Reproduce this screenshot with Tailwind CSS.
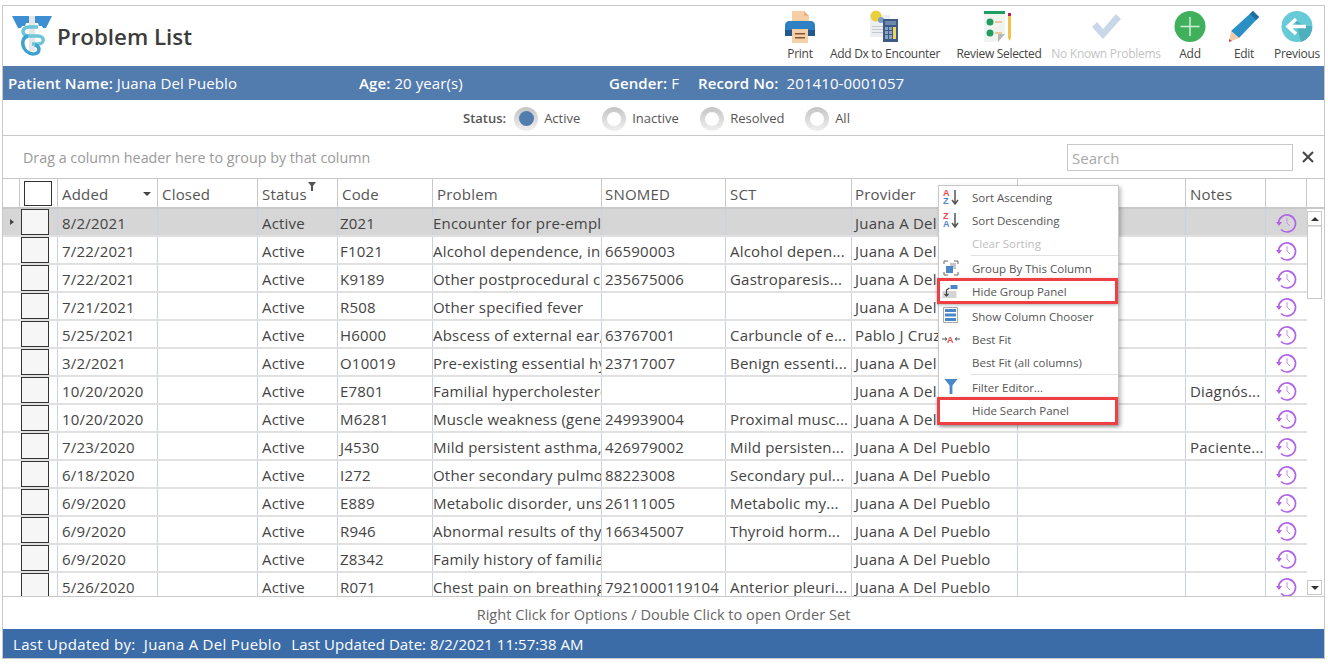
<!DOCTYPE html>
<html lang="en">
<head>
    <meta charset="UTF-8">
    <title>Problem List</title>
    <script src="https://cdn.jsdelivr.net/npm/@tailwindcss/browser@4"></script>
</head>
<body class="bg-white font-['Open_Sans',sans-serif] text-[#444] overflow-hidden">
<div class="relative mx-[2px] mt-[5px] w-[1323px] h-[654px] border border-[#c8c8c8] flex flex-col">

    <!-- title and toolbar -->
    <div class="h-[60px] flex items-start shrink-0">
        <div class="w-[54px] pl-[9px] pt-[9px] shrink-0">
            <svg width="42" height="42" viewBox="0 0 42 42">
                <path d="M0 1h17v7h-3l-1 3h-3l-1 2h-3z" fill="#3d8fd1"/>
                <path d="M40 1H23v7h3l1 3h3l1 2h3z" fill="#3d8fd1"/>
                <path d="M17 1h6v35h-6z" fill="#e4e6e8"/>
                <path d="M26 12h-9c-8 0-8 9 0 9h9c7 0 7 8 0 8h-6" fill="none" stroke="#6cc5d8" stroke-width="3.5"/>
                <path d="M16 21c-9 2-6 17 5 18 7 0 8-7 2-9" fill="none" stroke="#3da2d0" stroke-width="3.5"/>
            </svg>
        </div>
        <div class="pt-[15px] text-[22.3px] leading-[32px] font-semibold text-[#3c3c3c] whitespace-nowrap">Problem List</div>
        <div class="ml-auto flex h-full text-[12px] tracking-[-0.3px] text-[#444]">
            <div class="w-[44px] flex flex-col items-center pt-[4px]">
                <svg width="32" height="33" viewBox="0 0 32 33">
                    <path d="M8 1h12l5 5v8H8z" fill="#f7cfa6"/>
                    <path d="M20 1l5 5h-5z" fill="#e8b486"/>
                    <path d="M5 11h22c2 0 4 2 4 4v11H1V15c0-2 2-4 4-4z" fill="#2f7fc4"/>
                    <path d="M1 20h30v6H1z" fill="#23588f"/>
                    <path d="M8 19h16v14H8z" fill="#f7cfa6"/>
                    <path d="M11 23h10v1.500H11zM11 27h10v1.500H11z" fill="#7a5a3c"/>
                </svg>
                <span class="mt-[3px] leading-[16px]">Print</span>
            </div>
            <div class="w-[126px] flex flex-col items-center pt-[4px]">
                <svg width="32" height="33" viewBox="0 0 32 33">
                    <path d="M1 5h20v22H1z" fill="#eceff1"/>
                    <path d="M3 16h12v1H3zM3 19h12v1H3zM3 22h12v1H3z" fill="#c4c8cc"/>
                    <circle cx="7" cy="6" r="5.500" fill="#e9cf3c"/>
                    <circle cx="12" cy="10" r="3" fill="#7f9cc4"/>
                    <path d="M14 9h15v23H14z" fill="#3d5a84"/>
                    <path d="M16 11h11v4H16z" fill="#6d87ad"/>
                    <path d="M16 17h3v3h-3zM20 17h3v3h-3zM16 21h3v3h-3zM20 21h3v3h-3zM16 25h3v4h-3zM20 25h3v4h-3z" fill="#8aa2c4"/>
                    <path d="M24 17h3v12h-3z" fill="#f2d85c"/>
                </svg>
                <span class="mt-[3px] leading-[16px] whitespace-nowrap">Add Dx to Encounter</span>
            </div>
            <div class="w-[102px] flex flex-col items-center pt-[4px]">
                <svg width="32" height="33" viewBox="0 0 32 33">
                    <path d="M1 1h21v23l-7 8H1z" fill="#f1f3ef"/>
                    <path d="M1 1h21v3H1z" fill="#1f9d63"/>
                    <path d="M15 32v-8h7z" fill="#b7b9b5"/>
                    <circle cx="7" cy="12" r="3.500" fill="#1f9d63"/>
                    <circle cx="7" cy="23" r="3.500" fill="#1f9d63"/>
                    <path d="M12 12h7M12 23h7" stroke="#e7a24a" stroke-width="1.200"/>
                    <path d="M25 3h3v3h-3z" fill="#c2185b"/>
                    <path d="M25 6h3v22l-1.500 3-1.500-3z" fill="#f2c14e"/>
                </svg>
                <span class="mt-[3px] leading-[16px] whitespace-nowrap">Review Selected</span>
            </div>
            <div class="w-[112px] flex flex-col items-center pt-[4px]">
                <svg width="32" height="33" viewBox="0 0 32 33">
                    <path d="M2 17l5-5 6 7L26 4l5 5-18 20z" fill="#c9d7e8"/>
                </svg>
                <span class="mt-[3px] leading-[16px] whitespace-nowrap text-[#c4c4c4]">No Known Problems</span>
            </div>
            <div class="w-[56px] flex flex-col items-center pt-[4px]">
                <svg width="32" height="33" viewBox="0 0 32 33">
                    <circle cx="16" cy="16.500" r="15.500" fill="#41b05c"/>
                    <path d="M16 7v19M6.500 16.500h19" stroke="#cdeed5" stroke-width="1.500"/>
                </svg>
                <span class="mt-[3px] leading-[16px]">Add</span>
            </div>
            <div class="w-[52px] flex flex-col items-center pt-[4px]">
                <svg width="32" height="33" viewBox="0 0 32 33">
                    <path d="M25 1l6 6L11 28l-8-7z" fill="#2a8fc2"/>
                    <path d="M25 1l6 6-3 3-6-6z" fill="#1c6f9e"/>
                    <path d="M3 21l8 7-10 4z" fill="#f3c9ae"/>
                    <path d="M1 29l3 2-3 1z" fill="#c2455c"/>
                </svg>
                <span class="mt-[3px] leading-[16px]">Edit</span>
            </div>
            <div class="w-[54px] flex flex-col items-center pt-[4px]">
                <svg width="32" height="33" viewBox="0 0 32 33">
                    <circle cx="16" cy="16.500" r="15.500" fill="#66cbd6"/>
                    <path d="M14 10l10 6 7 0a15.500 15.500 0 0 1-11 16z" fill="#4fb0bd"/>
                    <path d="M15 9l-8 7.500 8 7.500M8 16.500h17" fill="none" stroke="#fff" stroke-width="3.500"/>
                </svg>
                <span class="mt-[3px] leading-[16px]">Previous</span>
            </div>
        </div>
    </div>

    <!-- patient bar -->
    <div class="h-[34px] shrink-0 bg-[#527bae] text-white text-[15px] tracking-[0.1px] flex items-center whitespace-nowrap">
        <div class="w-[356px] pl-[5px]"><b class="font-semibold">Patient Name:</b> Juana Del Pueblo</div>
        <div class="w-[250px]"><b class="font-semibold">Age:</b> 20 year(s)</div>
        <div class="w-[89px]"><b class="font-semibold">Gender:</b> F</div>
        <div><b class="font-semibold">Record No:</b>&nbsp; 201410-0001057</div>
    </div>

    <!-- status filter -->
    <div class="h-[36px] shrink-0 border-b border-[#c8c8c8] flex items-center text-[13px] text-[#555] pl-[460px] pt-[2px] whitespace-nowrap">
        <span class="font-semibold mr-[8px]">Status:</span>
        <span class="w-[24px] h-[24px] rounded-full bg-gradient-to-b from-[#c4c4c4] to-[#f0f0f0] flex items-center justify-center mr-[6px]"><span class="w-[15px] h-[15px] rounded-full bg-[#527bae]"></span></span>
        <span class="w-[58px]">Active</span>
        <span class="w-[24px] h-[24px] rounded-full bg-gradient-to-b from-[#c4c4c4] to-[#f0f0f0] flex items-center justify-center mr-[6px]"><span class="w-[14px] h-[14px] rounded-full bg-white"></span></span>
        <span class="w-[68px]">Inactive</span>
        <span class="w-[24px] h-[24px] rounded-full bg-gradient-to-b from-[#c4c4c4] to-[#f0f0f0] flex items-center justify-center mr-[6px]"><span class="w-[14px] h-[14px] rounded-full bg-white"></span></span>
        <span class="w-[75px]">Resolved</span>
        <span class="w-[24px] h-[24px] rounded-full bg-gradient-to-b from-[#c4c4c4] to-[#f0f0f0] flex items-center justify-center mr-[6px]"><span class="w-[14px] h-[14px] rounded-full bg-white"></span></span>
        <span>All</span>
    </div>

    <!-- group panel -->
    <div class="h-[43px] shrink-0 flex items-center border-b border-[#c8c8c8] pl-[20px] text-[14.3px] text-[#9a9a9a]">
        <span class="mt-[2px]">Drag a column header here to group by that column</span>
        <div class="ml-auto w-[226px] h-[27px] border border-[#c8c8c8] text-[15px] text-[#a8a8a8] pl-[4px] leading-[26px]">Search</div>
        <svg class="ml-[9px] mr-[10px]" width="12" height="12" viewBox="0 0 12 12"><path d="M1 1l10 10M11 1L1 11" stroke="#444" stroke-width="2"/></svg>
    </div>

    <!-- grid -->
    <div id="header" class="h-[30px] shrink-0 flex border-b-2 border-[#c8c8c8] text-[15px] tracking-[0.2px] leading-[30px] text-[#555]">
        <div class="w-[17px] border-r border-[#c8c8c8]"></div>
        <div class="w-[38px] border-r border-[#c8c8c8] pl-[4px] pt-[2px]"><div class="w-[28px] h-[25px] border border-[#333]"></div></div>
        <div class="w-[100px] border-r border-[#c8c8c8] pl-[4px] relative">Added<span class="absolute left-[85px] top-[13px] border-x-[4px] border-x-transparent border-t-[4px] border-t-[#444]"></span></div>
        <div class="w-[100px] border-r border-[#c8c8c8] pl-[4px]">Closed</div>
        <div class="w-[80px] border-r border-[#c8c8c8] pl-[4px] relative">Status
            <svg class="absolute left-[50px] top-[3px]" width="8" height="9" viewBox="0 0 8 9"><path d="M0 0h8L5 4v5H3V4z" fill="#555"/></svg>
        </div>
        <div class="w-[95px] border-r border-[#c8c8c8] pl-[4px]">Code</div>
        <div class="w-[169px] border-r border-[#c8c8c8] pl-[4px]">Problem</div>
        <div class="w-[124px] border-r border-[#c8c8c8] pl-[3px]">SNOMED</div>
        <div class="w-[126px] border-r border-[#c8c8c8] pl-[4px]">SCT</div>
        <div class="w-[166px] border-r border-[#c8c8c8] pl-[3px]">Provider</div>
        <div class="w-[168px] border-r border-[#c8c8c8]"></div>
        <div class="w-[80px] border-r border-[#c8c8c8] pl-[4px]">Notes</div>
        <div class="w-[41px] border-r border-[#c8c8c8]"></div>
    </div>

    <div class="h-[387px] shrink-0 flex overflow-hidden">
        <div id="rows" class="w-[1304px] shrink-0 text-[15px] tracking-[0.2px] text-[#444]"></div>
        <div class="w-[17px] flex flex-col pt-[2px] h-full">
            <div class="w-[15px] h-[15px] border border-[#c8c8c8] flex items-center justify-center"><span class="border-x-[4px] border-x-transparent border-b-[4px] border-b-[#333]"></span></div>
            <div class="w-[15px] h-[73px] border border-[#c8c8c8] border-t-[#e0e0e0]"></div>
            <div class="mt-auto mb-[1px] w-[15px] h-[15px] border border-[#c8c8c8] flex items-center justify-center"><span class="border-x-[4px] border-x-transparent border-t-[4px] border-t-[#333]"></span></div>
        </div>
    </div>

    <!-- footer -->
    <div class="h-[33px] shrink-0 border-t border-[#c8c8c8] flex items-center justify-center pt-[3px] text-[14.6px] text-[#666]">Right Click for Options / Double Click to open Order Set</div>
    <div class="h-[29px] shrink-0 bg-[#3b6ca8] text-white text-[15px] flex items-center pl-[10px] pt-[1px] whitespace-pre">
        <span class="tracking-[0.3px]">Last Updated by:  Juana A Del Pueblo</span>
        <span class="ml-[10px] tracking-[0.05px]">Last Updated Date: 8/2/2021 11:57:38 AM</span>
    </div>

    <!-- column context menu -->
    <div class="absolute left-[935px] top-[179px] w-[181px] bg-white border border-[#c8c8c8] shadow-[2px_2px_4px_rgba(0,0,0,0.25)] text-[11.5px] text-[#555] pb-[2px]">
        <div class="h-[23px] flex items-center pl-[33px] relative">
            <svg class="absolute left-[4px] top-[3px]" width="17" height="17" viewBox="0 0 17 17"><text x="0" y="7" font-size="9" font-weight="700" fill="#e8474c" font-family="Liberation Sans">A</text><text x="0" y="15" font-size="9" font-weight="700" fill="#4a86c8" font-family="Liberation Sans">Z</text><path d="M12 1v13M9 11l3 4 3-4" fill="none" stroke="#555" stroke-width="1.500"/></svg>
            Sort Ascending</div>
        <div class="h-[23px] flex items-center pl-[33px] relative">
            <svg class="absolute left-[4px] top-[3px]" width="17" height="17" viewBox="0 0 17 17"><text x="0" y="7" font-size="9" font-weight="700" fill="#e8474c" font-family="Liberation Sans">Z</text><text x="0" y="15" font-size="9" font-weight="700" fill="#4a86c8" font-family="Liberation Sans">A</text><path d="M12 1v13M9 11l3 4 3-4" fill="none" stroke="#555" stroke-width="1.500"/></svg>
            Sort Descending</div>
        <div class="h-[23px] flex items-center pl-[33px] text-[#bdbdbd]">Clear Sorting</div>
        <div class="ml-[32px] h-[1px] bg-[#e0e0e0] mb-[1px]"></div>
        <div class="h-[23px] flex items-center pl-[33px] relative">
            <svg class="absolute left-[4px] top-[3px]" width="16" height="16" viewBox="0 0 16 16"><path d="M5 1H1v3M11 1h4v3M1 12v3h4M15 12v3h-4" fill="none" stroke="#666"/><path d="M7 3h6v6H7z" fill="#c4c8cc"/><path d="M3 6h7v7H3z" fill="#4a86c8"/></svg>
            Group By This Column</div>
        <div class="h-[23px] flex items-center pl-[33px] relative">
            <svg class="absolute left-[2px] top-[3px]" width="17" height="16" viewBox="0 0 16 16"><path d="M9 2h7v4H9z" fill="#4a86c8"/><path d="M1 8h14v7H1z" fill="#d4d4d4"/><path d="M8 5L5 7v6M3 11l2 2 2-2" fill="none" stroke="#444" stroke-width="1.200"/></svg>
            Hide Group Panel</div>
        <div class="ml-[32px] h-[1px] bg-[#e0e0e0] mb-[1px]"></div>
        <div class="h-[23px] flex items-center pl-[33px] relative">
            <svg class="absolute left-[4px] top-[2px]" width="15" height="16" viewBox="0 0 15 16"><path d="M.5.500h14v15H.5z" fill="#fff" stroke="#aaa"/><path d="M2 2h11v3H2zM2 6.500h11v3H2zM2 11h11v3H2z" fill="#4a86c8"/></svg>
            Show Column Chooser</div>
        <div class="h-[23px] flex items-center pl-[33px] relative">
            <svg class="absolute left-[3px] top-[6px]" width="18" height="10" viewBox="0 0 18 10"><text x="5" y="8.500" font-size="9" font-weight="700" fill="#e8474c" font-family="Liberation Sans">A</text><path d="M0 5h4M14 5h4M3 3.500L5 5 3 6.500M15 3.500L13 5l2 1.500" fill="none" stroke="#555"/></svg>
            Best Fit</div>
        <div class="h-[23px] flex items-center pl-[33px]">Best Fit (all columns)</div>
        <div class="ml-[32px] h-[1px] bg-[#e0e0e0] mb-[1px]"></div>
        <div class="h-[23px] flex items-center pl-[33px] relative">
            <svg class="absolute left-[5px] top-[3px]" width="14" height="15" viewBox="0 0 14 16"><path d="M0 0h14L8.500 7v9h-3V7z" fill="#4a86c8"/></svg>
            Filter Editor...</div>
        <div class="h-[23px] flex items-center pl-[33px]">Hide Search Panel</div>
        <div class="absolute left-[-2px] top-[92px] w-[181px] h-[26px] border-[3px] border-[#ee3f43] shadow-[0_1px_3px_rgba(0,0,0,0.3)]"></div>
        <div class="absolute left-[-2px] top-[211px] w-[181px] h-[28px] border-[3px] border-[#ee3f43] shadow-[0_1px_3px_rgba(0,0,0,0.3)]"></div>
    </div>
</div>

<script>
    // added, code, problem, snomed, sct, provider, notes
    const data = [
        ['8/2/2021', 'Z021', 'Encounter for pre-empl', '', '', 'Juana A Del Pueblo', ''],
        ['7/22/2021', 'F1021', 'Alcohol dependence, in', '66590003', 'Alcohol depen...', 'Juana A Del Pueblo', ''],
        ['7/22/2021', 'K9189', 'Other postprocedural cc', '235675006', 'Gastroparesis...', 'Juana A Del Pueblo', ''],
        ['7/21/2021', 'R508', 'Other specified fever', '', '', 'Juana A Del Pueblo', ''],
        ['5/25/2021', 'H6000', 'Abscess of external ear,', '63767001', 'Carbuncle of e...', 'Pablo J Cruz', ''],
        ['3/2/2021', 'O10019', 'Pre-existing essential hy', '23717007', 'Benign essenti...', 'Juana A Del Pueblo', ''],
        ['10/20/2020', 'E7801', 'Familial hypercholesterc', '', '', 'Juana A Del Pueblo', 'Diagnós...'],
        ['10/20/2020', 'M6281', 'Muscle weakness (gene', '249939004', 'Proximal musc...', 'Juana A Del Pueblo', ''],
        ['7/23/2020', 'J4530', 'Mild persistent asthma,', '426979002', 'Mild persisten...', 'Juana A Del Pueblo', 'Paciente...'],
        ['6/18/2020', 'I272', 'Other secondary pulmo', '88223008', 'Secondary pul...', 'Juana A Del Pueblo', ''],
        ['6/9/2020', 'E889', 'Metabolic disorder, uns', '26111005', 'Metabolic my...', 'Juana A Del Pueblo', ''],
        ['6/9/2020', 'R946', 'Abnormal results of thy', '166345007', 'Thyroid horm...', 'Juana A Del Pueblo', ''],
        ['6/9/2020', 'Z8342', 'Family history of familia', '', '', 'Juana A Del Pueblo', ''],
        ['5/26/2020', 'R071', 'Chest pain on breathing', '7921000119104', 'Anterior pleuri...', 'Juana A Del Pueblo', '']
    ];

    const clock = `<svg width="21" height="20" viewBox="0 0 21 20" fill="none" stroke="#b065e8" stroke-width="1.700">
        <path d="M2.500 10A8.500 8.500 0 1 1 5 16.500"/><path d="M0 9h6l-3 4z" fill="#b065e8" stroke="none"/><path d="M11 5v5l3 3" stroke-width="1" stroke="#c990f0"/></svg>`;

    let html = '';
    data.forEach((r, i) => {
        const bg = i === 0 ? 'bg-[#d6d6d6]' : '';
        const arrow = i === 0 ? '<span class="border-y-[3px] border-y-transparent border-l-[4px] border-l-[#444]"></span>' : '';
        html += `<div class="h-[28px] flex border-b-2 border-[#e0e0e0] leading-[28px] whitespace-nowrap ${bg}">
            <div class="w-[17px] flex items-center justify-center">${arrow}</div>
            <div class="w-[38px] pl-[1px] border-r border-[#c9d2de]"><div class="w-[28px] h-[26px] border border-[#333] bg-[#f6f6f6]"></div></div>
            <div class="w-[100px] pl-[4px] border-r border-[#c9d2de]">${r[0]}</div>
            <div class="w-[100px] border-r border-[#c9d2de]"></div>
            <div class="w-[80px] pl-[4px] border-r border-[#c9d2de]">Active</div>
            <div class="w-[95px] pl-[2px] border-r border-[#c9d2de]">${r[1]}</div>
            <div class="w-[169px] border-r border-[#c9d2de] overflow-hidden">${r[2]}</div>
            <div class="w-[124px] pl-[3px] border-r border-[#c9d2de]">${r[3]}</div>
            <div class="w-[126px] pl-[4px] border-r border-[#c9d2de]">${r[4]}</div>
            <div class="w-[166px] pl-[3px] border-r border-[#c9d2de]">${r[5]}</div>
            <div class="w-[168px] border-r border-[#c9d2de]"></div>
            <div class="w-[80px] pl-[4px] border-r border-[#c9d2de]">${r[6]}</div>
            <div class="w-[41px] flex items-center justify-center pt-[2px]">${clock}</div>
        </div>`;
    });
    document.getElementById('rows').innerHTML = html;
</script>
</body>
</html>
